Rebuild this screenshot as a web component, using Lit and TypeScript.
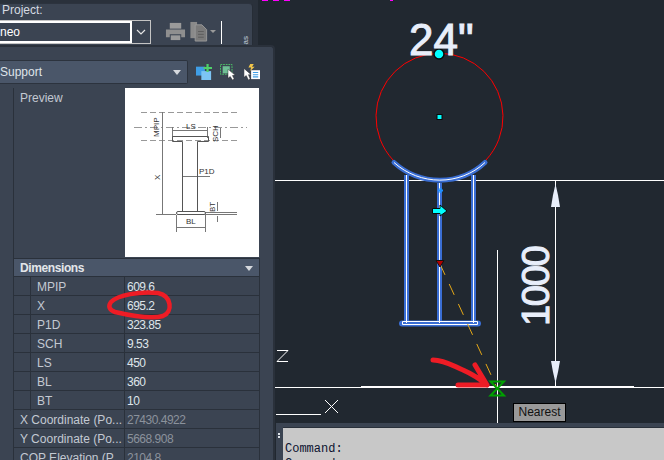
import { LitElement, html, css, svg } from "lit";
import { customElement } from "lit/decorators.js";

const dims = [["MPIP","609.6"],["X","695.2"],["P1D","323.85"],["SCH","9.53"],["LS","450"],["BL","360"],["BT","10"]];
const coords = [["X Coordinate (Po...","27430.4922"],["Y Coordinate (Po...","5668.908"],["COP Elevation (P...","2104.8"]];

const preview = svg`<svg class="pv" width="134" height="169" viewBox="0 0 134 169">
  <g fill="none" stroke="#999" stroke-width="1">
    <path d="M16 24.500H114M16 52.500H114" stroke-dasharray="6 3"/>
    <path d="M9 39.500H122" stroke-dasharray="8 3 2 3"/>
  </g>
  <g fill="none" stroke="#777" stroke-width="1">
    <path d="M47.500 39V50M82.500 39V50M47 42.500H83"/>
    <path d="M37.500 24V126M31 126.500H51"/>
    <path d="M57 88.500H85"/>
    <path d="M51.500 127V144M80.500 127V144M51 139.500H81"/>
    <path d="M80 124.500H112M80 126.500H112M92.500 114V123M92.500 128V134"/>
    <path d="M95.500 40V50"/>
  </g>
  <g fill="none" stroke="#555" stroke-width="1">
    <path d="M47.500 48.500H83.500V53.500H72.500V123.500M47.500 48.500V53.500H57.500V123.500"/>
    <rect x="51.500" y="123.500" width="29" height="3" rx="1.500" fill="#fff"/>
  </g>
  <g class="pvt">
    <text x="61" y="41">LS</text>
    <text x="74" y="86">P1D</text>
    <text x="61" y="136">BL</text>
    <text transform="translate(35 92) rotate(-90)">X</text>
    <text transform="translate(34 49) rotate(-90)">MPIP</text>
    <text transform="translate(93 54) rotate(-90)">SCH</text>
    <text transform="translate(90 124) rotate(-90)">BT</text>
  </g>
</svg>`;

const canvas = svg`<svg class="cv" width="664" height="460" viewBox="0 0 664 460">
  <path d="M262 .500H268M273 .500H279M284 .500H290M390 .500H393" stroke="#f0f" fill="none"/>
  <g fill="none" stroke="#fff" stroke-width="1">
    <path d="M275 180.500H664M275 387.500H664M497.500 250V423M555.500 181V386"/>
    <path d="M276 414.500H321M325 400L338 413M338 400L325 413M277 350.500H288L277 361.500H288" />
    <path d="M361 387H634" stroke-width="2"/>
  </g>
  <path d="M393 160A63.500 63.500 0 1 1 486 160" fill="none" stroke="#ff0000"/>
  <g fill="none" stroke="#3a6ed4" stroke-width="5">
    <path d="M394 162.500C420 186 460 186 485 162.500" stroke-linecap="round"/>
    <path d="M406.500 175V323M439.500 183V323M473.500 175V323"/>
    <path d="M402 323.500H478" stroke-width="6" stroke-linecap="round"/>
  </g>
  <g fill="none" stroke="#fff" stroke-width="1">
    <path d="M394 162.500C420 186 460 186 485 162.500"/>
    <path d="M406.500 175V323M439.500 183V323M473.500 175V323M402.500 321.500H477.500V324.500H402.500Z"/>
  </g>
  <path d="M438 190.500H443M440.500 188V193" stroke="#1e90ff" fill="none" stroke-width="2"/>
  <path d="M440 264L497 388" stroke="#e6a817" fill="none" stroke-dasharray="12 10"/>
  <path d="M436 260.500H444L440 267Z" fill="#b00000" stroke="#111" stroke-width="1"/>
  <circle cx="439" cy="54" r="5" fill="#00ffff" stroke="#0a0a0a" stroke-width="1.500"/>
  <rect x="437" y="114.500" width="5" height="5" fill="#00ffff" stroke="#0a0a0a"/>
  <path d="M432.500 208.500H440V205L447 211L440 216V213.500H432.500Z" fill="#00ffff" stroke="#0a0a0a"/>
  <path d="M555.500 184L558 195L560 207H551L553 195Z" fill="#e8eefa"/>
  <path d="M555.500 383L558 372L560 361H551L553 372Z" fill="#e8eefa"/>
  <text class="big" x="409" y="55">24"</text>
  <text class="dim" transform="translate(549 326) rotate(-90)">1000</text>
  <path d="M490.500 381.500H504L490.500 395.500H504Z" fill="none" stroke="#00a000" stroke-width="2"/>
  <path d="M433 360C445 360 455 367 463 370C472 374 480 379 487 385M475 365L487 385H458" fill="none" stroke="#ee1c25" stroke-width="5" stroke-linecap="round" stroke-linejoin="round"/>
</svg>`;

const ic = {
  printer: svg`<svg width="21" height="21" viewBox="0 0 22 22"><path d="M5 2H17V8H5Z" fill="#9a9a9a"/><path d="M1 9H21V17H17V14H5V17H1Z" fill="#8f8f8f"/><path d="M6 15H16V20H6Z" fill="#9a9a9a"/></svg>`,
  pages: svg`<svg width="18" height="21" viewBox="0 0 18 22"><path d="M0 1H7V18H0Z" fill="#8a8a8a"/><path d="M5 4H12L17 9V21H5Z" fill="#7a7a7a" stroke="#999"/><path d="M8 11H14M8 14H14M8 17H14" stroke="#5c5c5c"/></svg>`,
  add: svg`<svg width="16" height="16" viewBox="0 0 18 18"><rect x="0" y="3" width="10" height="10" fill="#3f9ee6"/><rect x="6" y="8" width="11" height="10" fill="#7cc4f4"/><path d="M13 0V9M8.500 4.500H18" stroke="#4fd06a" stroke-width="2.500"/></svg>`,
  select: svg`<svg width="16" height="16" viewBox="0 0 18 18"><rect x=".5" y=".5" width="13" height="11" fill="none" stroke="#4fd06a" stroke-dasharray="2 1"/><rect x="3" y="2.500" width="8" height="8" fill="#6fbf95"/><path d="M9 6L9 16L11.500 14L14 18L16 17L14 13L17 12.500Z" fill="#fff" stroke="#222" stroke-width=".5"/></svg>`,
  quick: svg`<svg width="16" height="16" viewBox="0 0 18 18"><path d="M0 5V15L2.500 13L5 18L7 17L5 12L8 12Z" fill="#fff" stroke="#222" stroke-width=".5"/><path d="M7 0L11 0L9 3H12L7 8L8 4H5Z" fill="#f3c64a"/><rect x="8" y="7" width="10" height="10" fill="#fff"/><path d="M10 9.500H16M10 12H16M10 14.500H16" stroke="#3f9ee6" stroke-width="1.200"/></svg>`,
};

@customElement("app-root")
export class AppRoot extends LitElement {
  static styles = css`
    :host { display: block; position: relative; width: 664px; height: 460px; overflow: hidden; background: #212830; font-family: "Liberation Sans", Arial, sans-serif; font-size: 12px; color: #dfe4ea; }
    .cv { position: absolute; inset: 0; display: block; }
    .big { font: 400 44px "Liberation Sans", sans-serif; fill: #e8eefa; stroke: #e8eefa; stroke-width: 1; }
    .dim { font: 400 38px "Liberation Sans", sans-serif; fill: #e8eefa; stroke: #e8eefa; stroke-width: 1; letter-spacing: -1.300px; }

    .cmd { position: absolute; left: 276px; right: 0; top: 423px; bottom: 0; background: #3b4452; padding: 4px 0 0 7px; display: flex; }
    .cmd-text { flex: 1; background: #c8c8c8; border-top: 1px solid #2a313b; padding: 14px 0 0 2px; font: 12px/15px "Liberation Mono", monospace; color: #0c1330; }
    .grip { position: absolute; left: 2px; top: 10px; width: 2px; height: 2px; background: #dfe4ea; box-shadow: 0 3px 0 #dfe4ea; }
    .tip { position: absolute; left: 513px; top: 403px; width: 53px; height: 19px; box-sizing: border-box; background: #999; border: 1px solid #000; color: #111; font-size: 12px; line-height: 17px; text-align: center; }

    .strip { position: absolute; left: 0; top: 0; width: 258px; height: 46px; background: #2a313b; }
    .back { position: absolute; left: 0; top: 3px; width: 253px; height: 60px; background: #3b4452; border-right: 1px solid #262d36; border-top: 1px solid #2c333e; border-top-right-radius: 4px; box-sizing: border-box; display: flex; flex-direction: column; }
    .proj { padding: 0 0 0 2px; height: 16px; line-height: 13px; color: #d6dbe2; font-size: 12px; }
    .proj-row { display: flex; align-items: flex-start; }
    .combo { width: 151px; height: 24px; box-sizing: border-box; border: 1px solid #c4c4c4; border-left: 0; display: flex; color: #fff; font-size: 12px; }
    .combo span { flex: 1; border: 2px solid #fff; border-left: 0; line-height: 18px; }
    .combo i { width: 18px; display: flex; align-items: center; justify-content: center; }
    .tools { display: flex; gap: 4px; margin-left: 14px; align-items: flex-start; padding-top: 1px; }
    .caret { width: 0; height: 0; border: 3px solid transparent; border-top: 3px solid #9a9a9a; margin: 9px 0 0 -2px; }
    .sep { width: 1px; height: 23px; background: #fff; margin-left: 1px; }
    .vt { position: absolute; left: 241px; top: 32px; font-size: 8px; writing-mode: vertical-rl; color: #c4d0dc; transform: rotate(180deg); }

    .panel { position: absolute; left: 0; top: 45px; width: 275px; height: 415px; box-sizing: border-box; background: #3b4452; border-top: 2px solid #2a313b; border-right: 2px solid #2a313b; border-top-right-radius: 4px; padding-top: 13px; display: flex; flex-direction: column; }
    .sel-row { display: flex; align-items: center; height: 24px; }
    .sel { width: 188px; height: 24px; box-sizing: border-box; background: #4a5669; border: 1px solid #2c333e; border-left: 0; border-radius: 0 2px 2px 0; display: flex; align-items: center; justify-content: space-between; padding: 0 6px 0 0; font-size: 12px; color: #dfe4ea; }
    .tri { width: 0; height: 0; border: 4px solid transparent; border-top: 5px solid #d6d9de; margin-top: 5px; }
    .icons { display: flex; gap: 8px; margin-left: 8px; }
    .grid { margin: 4px 0 0 13px; width: 247px; }
    .pv-row { display: flex; height: 170px; border-left: 1px solid #2a313b; box-sizing: border-box; }
    .pv-label { width: 111px; padding: 3px 0 0 6px; color: #c3c9d2; box-sizing: border-box; }
    .pv-box { width: 134px; height: 169px; background: #fff; }
    .pv { display: block; }
    .pvt { font: 8px "Liberation Sans", sans-serif; fill: #333; }
    .hdr { height: 19px; box-sizing: border-box; background: #4a5669; border: 1px solid #2a313b; display: flex; align-items: center; justify-content: space-between; font-weight: 700; font-size: 12px; letter-spacing: -0.400px; padding: 0 6px; color: #e3e6ea; }
    .row { display: grid; height: 19px; box-sizing: border-box; border-bottom: 1px solid #2a313b; line-height: 20px; border-right: 1px solid #2a313b; }
    .row.d { grid-template-columns: 18px 94px 1fr; }
    .row.c { grid-template-columns: 112px 1fr; border-left: 1px solid #2a313b; }
    .row.c { grid-template-columns: 111px 1fr; }
    .row .rail { border-left: 1px solid #2a313b; border-right: 1px solid #2a313b; }
    .row .k { padding-left: 6px; color: #c3c9d2; border-right: 1px solid #2a313b; white-space: nowrap; overflow: hidden; }
    .row .v { padding-left: 2px; color: #dfe4ea; letter-spacing: -0.500px; }
    .row.c .v { color: #8b929c; }
    .mark { position: absolute; left: 0; top: 0; pointer-events: none; }
  `;

  render() {
    return html`
      ${canvas}
      <div class="tip">Nearest</div>
      <div class="cmd"><div class="grip"></div><div class="cmd-text">Command:<br>Command:</div></div>
      <div class="strip"></div>
      <div class="back">
        <div class="proj">Project:</div>
        <div class="proj-row">
          <div class="combo"><span>neo</span><i><svg width="10" height="6" viewBox="0 0 10 6"><path d="M1 1L5 5L9 1" fill="none" stroke="#e4e4e4" stroke-width="1.200"/></svg></i></div>
          <div class="tools">${ic.printer}${ic.pages}<div class="caret"></div><div class="sep"></div></div>
        </div>
        <div class="vt">as</div>
      </div>
      <div class="panel">
        <div class="sel-row">
          <div class="sel"><span>Support</span><div class="tri"></div></div>
          <div class="icons">${ic.add}${ic.select}${ic.quick}</div>
        </div>
        <div class="grid">
          <div class="pv-row">
            <div class="pv-label">Preview</div>
            <div class="pv-box">${preview}</div>
          </div>
          <div class="hdr"><span>Dimensions</span><div class="tri"></div></div>
          ${dims.map(([k, v]) => html`<div class="row d"><div class="rail"></div><div class="k">${k}</div><div class="v">${v}</div></div>`)}
          ${coords.map(([k, v]) => html`<div class="row c"><div class="k">${k}</div><div class="v">${v}</div></div>`)}
        </div>
      </div>
      <svg class="mark" width="200" height="340" viewBox="0 0 200 340">
        <path d="M111 302C118 295 140 291 158 293C172 296 173 312 163 316C150 320 128 315 115 312C109 310 108 306 111 302Z" fill="none" stroke="#ee1c25" stroke-width="4.500"/>
      </svg>
    `;
  }
}
